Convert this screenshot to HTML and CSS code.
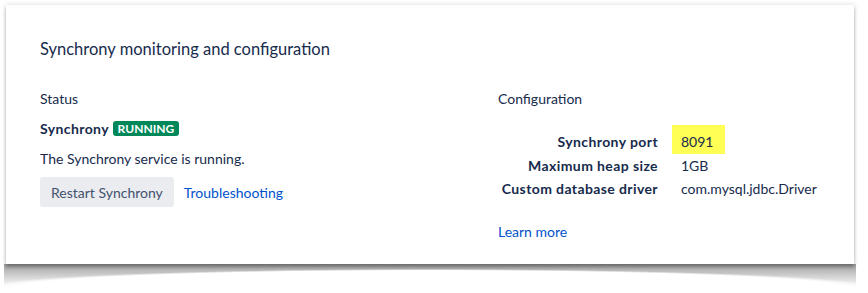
FILE: index.html
```html
<!DOCTYPE html>
<html>
<head>
  <meta charset="utf-8">
  <title>Synchrony monitoring and configuration</title>
  <link rel="stylesheet" href="styles.css">
</head>
<body>

  <div class="card">
    <h1>Synchrony monitoring and configuration</h1>

    <div class="columns">
      <div class="status">
        <h2>Status</h2>
        <p class="service">
          <strong>Synchrony</strong>
          <span class="lozenge">Running</span>
        </p>
        <p>The Synchrony service is running.</p>
        <div class="actions">
          <button type="button" class="button">Restart Synchrony</button>
          <a href="#" class="link">Troubleshooting</a>
        </div>
      </div>

      <div class="config">
        <h2>Configuration</h2>
        <dl class="settings">
          <dt>Synchrony port</dt>
          <dd><span class="highlight">8091</span></dd>
          <dt>Maximum heap size</dt>
          <dd>1GB</dd>
          <dt>Custom database driver</dt>
          <dd>com.mysql.jdbc.Driver</dd>
        </dl>
        <a href="#" class="link">Learn more</a>
      </div>
    </div>
  </div>
  <!-- /.card -->

</body>
</html>
```

FILE: styles.css
```css
html {
  height: 100%;
}

body {
  margin: 0;
  min-height: 100%;
  padding: 5px 0 0 6px;
  box-sizing: border-box;
  background: #FFF;
  color: #172B4D;
  font-size: 14px;
  font-family: Lato, "Open Sans", Arial, sans-serif;
}

.card {
  position: relative;
  box-sizing: border-box;
  width: 848px;
  height: 259px;
  padding: 31px 34px 0;
  background: #FFF;
  box-shadow: 0 0 5px rgba(0, 0, 0, 0.16), 0 3px 3px rgba(0, 0, 0, 0.25);
}

/* curled shadow under the card */
.card::after {
  content: "";
  position: absolute;
  left: -2px;
  right: -2px;
  top: 100%;
  height: 24px;
  background: linear-gradient(to bottom, rgba(0, 0, 0, 0.38), rgba(0, 0, 0, 0.18) 50%, rgba(0, 0, 0, 0));
  -webkit-mask-image: radial-gradient(ellipse 53% 19px at 50% 100%, transparent 92%, #000 100%);
  mask-image: radial-gradient(ellipse 53% 19px at 50% 100%, transparent 92%, #000 100%);
}

h1 {
  margin: 0;
  font-size: 16.5px;
  font-weight: normal;
  line-height: 26px;
}

h2 {
  margin: 0 0 6px;
  font-size: 14px;
  font-weight: normal;
  line-height: 24px;
}

.columns {
  display: grid;
  grid-template-columns: 458px 1fr;
  margin-top: 25px;
}

p {
  margin: 0 0 7px;
  line-height: 23px;
}

strong,
.settings dt {
  font-weight: bold;
  letter-spacing: 0.4px;
}

.lozenge {
  display: inline-block;
  padding: 0 5px;
  border-radius: 3px;
  background: #00875A;
  color: #FFF;
  font-size: 12px;
  font-weight: bold;
  line-height: 15px;
  text-transform: uppercase;
  vertical-align: 1px;
}

.actions {
  display: flex;
  align-items: center;
  gap: 10px;
}

.button {
  border: 0 none;
  border-radius: 3px;
  background: #EBECF0;
  color: #42526E;
  font-family: inherit;
  font-size: 14px;
  height: 30px;
  padding: 0 11px;
}

.link {
  color: #0052CC;
  text-decoration: none;
}

.settings {
  display: grid;
  grid-template-columns: minmax(160px, auto) auto;
  justify-content: start;
  column-gap: 14px;
  align-items: center;
  margin: 19px 0 22px;
}

.settings dt {
  text-align: right;
  line-height: 23.5px;
  white-space: nowrap;
}

.settings dd {
  margin: 0;
  padding-left: 9px;
  line-height: 23.5px;
  white-space: nowrap;
}

.highlight {
  display: inline-block;
  margin: -6px 0 -1px -9px;
  padding: 7px 12px 2px 9px;
  line-height: 20px;
  background: #FFFF55;
}
```
